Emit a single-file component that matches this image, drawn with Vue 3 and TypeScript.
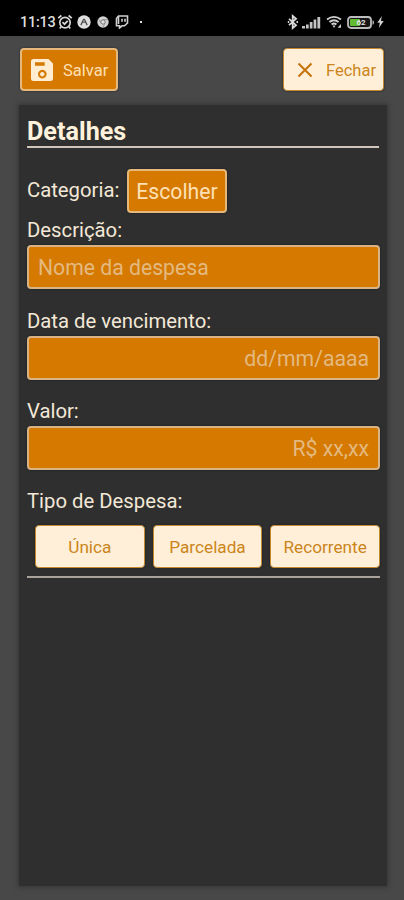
<script setup lang="ts">
import { ref } from 'vue'

interface Field {
  id: string
  label: string
  placeholder: string
  alignEnd: boolean
}

const fields: Field[] = [
  { id: 'descricao', label: 'Descrição:', placeholder: 'Nome da despesa', alignEnd: false },
  { id: 'vencimento', label: 'Data de vencimento:', placeholder: 'dd/mm/aaaa', alignEnd: true },
  { id: 'valor', label: 'Valor:', placeholder: 'R$ xx,xx', alignEnd: true },
]

const values = ref<Record<string, string>>({ descricao: '', vencimento: '', valor: '' })
const types: string[] = ['Única', 'Parcelada', 'Recorrente']
</script>

<template>
  <div class="screen">
    <header class="status">
      <div class="status-left">
        <span class="clock">11:13</span>
        <svg class="alarm" width="16" height="16" viewBox="0 0 16 16" fill="none" stroke="#d6d6d6" stroke-width="1.7">
          <circle cx="8" cy="8.6" r="5.2" />
          <path d="M1.2 4.2 4.4 1.5M14.8 4.2 11.6 1.5M5.5 8.2l2 2 3.2-3.400M4.200 12.600 2.800 14.400M11.800 12.600l1.400 1.800" />
        </svg>
        <svg class="round" width="14" height="14" viewBox="0 0 14 14">
          <circle cx="7" cy="7" r="6.7" fill="#dedede" />
          <path d="M3.800 10C5.300 8 6 4.200 7 4.200S8.700 8 10.200 10M7 6.500v1.500" fill="none" stroke="#444" stroke-width="1.300" />
        </svg>
        <svg class="chrome" width="12" height="12" viewBox="0 0 12 12">
          <circle cx="6" cy="6" r="5.700" fill="#d4d4d4" />
          <circle cx="6" cy="6" r="2.200" fill="#e2e2e2" stroke="#777" />
          <path d="M6 3.600h5M4 7.200 1.500 3M8 7.200 5.800 11.300" stroke="#888" stroke-width=".8" />
        </svg>
        <svg class="twitch" width="14" height="14" viewBox="0 0 14 14" fill="none" stroke="#d0d0d0" stroke-width="1.600">
          <path d="M3.500 1h9v7L9.500 10.800H7L4.500 13v-2.200H1.500V3.500z" />
          <path d="M3.500 1v8M7 3.700v3M10 3.700v3" />
        </svg>
        <span class="dot"></span>
      </div>
      <div class="status-right">
        <svg width="12" height="16" viewBox="0 0 12 16" fill="none" stroke="#d9d9d9" stroke-width="1.800">
          <path d="M2 4.800 9 11.200 5.700 14V2L9 4.800 2 11.200M.8 8h1.400M9.500 8H11" />
        </svg>
        <svg class="signal" width="19" height="13" viewBox="0 0 19 13" fill="#c4c4c4">
          <path d="M0 10h3v2.500H0zM4 8.500h2.700v4H4zM7.800 6h2.700v6.500H7.800zM11.600 3.500h2.700v9h-2.700zM15.400 1h2.800v11.500h-2.800z" />
        </svg>
        <svg class="wifi" width="16" height="14" viewBox="0 0 16 14" fill="none" stroke="#cfcfcf" stroke-width="1.900">
          <path d="M1 4.500Q8-.800 15 4.500M3.400 7Q8 3.400 12.600 7M5.600 9.500Q8 7.500 10.400 9.500" />
          <path d="M6.500 10.500h3L8 13zM11.500 12.800h3.500V9z" fill="#ccc" stroke="none" />
        </svg>
        <svg class="battery" width="28" height="13" viewBox="0 0 28 13">
          <rect x="1" y="1" width="23" height="11" rx="3" fill="#161616" stroke="#bcbcbc" stroke-width="1.800" />
          <rect x="3" y="3" width="10" height="7" rx="1" fill="#62bd32" />
          <path d="M25.500 4.200c2 .5 2 4.100 0 4.600z" fill="#bbb" />
          <text x="14" y="9.300" class="level">62</text>
        </svg>
        <svg class="bolt" width="7" height="12" viewBox="0 0 7 12">
          <path d="M4.800 0 .3 6.700h2.500L1.900 12l4.800-7H4z" fill="#d0d0d0" />
        </svg>
      </div>
    </header>

    <nav class="actions">
      <button class="btn save" type="button">
        <svg width="24" height="24" viewBox="0 0 24 24">
          <path fill-rule="evenodd" d="M3.500 1h15L23 5.500v15q0 2.500-2.500 2.500h-17Q1 23 1 20.500v-17Q1 1 3.500 1zM5 4.200v3.600h9.700V4.200zM12.300 11.800a4.300 4.300 0 1 0 .01 0zM12.300 14a2.200 2.200 0 1 1-.01 0z" fill="#ffecd1" />
        </svg>
        <span>Salvar</span>
      </button>
      <button class="btn light close" type="button">
        <svg width="16" height="16" viewBox="0 0 16 16" fill="none" stroke="#c67209" stroke-width="2">
          <path d="m1.500 1.500 13 13M14.500 1.500l-13 13" />
        </svg>
        <span>Fechar</span>
      </button>
    </nav>

    <main class="panel">
      <h1>Detalhes</h1>
      <div class="category">
        <span>Categoria:</span>
        <button class="btn choose" type="button">Escolher</button>
      </div>
      <div v-for="field in fields" :key="field.id" class="field">
        <label :for="field.id">{{ field.label }}</label>
        <input :id="field.id" v-model="values[field.id]" type="text" :placeholder="field.placeholder" :class="{ end: field.alignEnd }" />
      </div>
      <p class="type-label">Tipo de Despesa:</p>
      <div class="types">
        <button v-for="name in types" :key="name" class="btn light" type="button">{{ name }}</button>
      </div>
    </main>
  </div>
</template>

<style>
body {
  background: #484848;
}
</style>

<style scoped>
* {
  box-sizing: border-box;
}
.screen {
  display: flex;
  flex-direction: column;
  height: 900px;
  background: #484848;
  color: #f3e8d7;
  font-family: Roboto, "Liberation Sans", sans-serif;
}
.status {
  display: flex;
  justify-content: space-between;
  height: 36px;
  padding: 8px 20px 0 20px;
  background: #000;
}
.status-left,
.status-right {
  display: flex;
  align-items: center;
  height: 28px;
}
.clock {
  width: 36px;
  padding-top: 1px;
  color: #dedede;
  font-size: 14.5px;
  font-weight: 500;
  letter-spacing: -0.25px;
}
.alarm {
  margin-left: 1px;
}
.round {
  margin-left: 4px;
}
.chrome {
  margin-left: 6px;
}
.twitch {
  margin-left: 6px;
}
.dot {
  width: 2px;
  height: 2px;
  margin-left: 11px;
  background: #ddd;
}
.signal {
  margin-left: 3px;
}
.wifi {
  margin-left: 5px;
}
.battery {
  margin-left: 5px;
}
.level {
  fill: #e4e4e4;
  font-size: 8px;
  font-weight: 700;
  text-anchor: middle;
}
.bolt {
  margin-left: 2px;
}
.actions {
  display: flex;
  justify-content: space-between;
  padding: 12px 20px 14px;
}
.btn {
  display: flex;
  align-items: center;
  justify-content: center;
  height: 43px;
  padding: 0;
  border: 2px solid #e6b87a;
  border-radius: 4px;
  background: #d57900;
  color: #ffe0b4;
  font-family: inherit;
  font-size: 17.2px;
  box-shadow: 0 0 2px #17202a;
}
.btn.light {
  border: 1px solid #c4892f;
  background: #ffefd9;
  color: #cb851b;
}
.btn.save {
  width: 98px;
  justify-content: flex-start;
  padding-left: 8px;
  gap: 9px;
  font-size: 16.500px;
}
.btn.close {
  width: 101px;
  justify-content: flex-start;
  padding-left: 13px;
  gap: 13px;
  font-size: 16.500px;
}
.btn.save span,
.btn.close span {
  padding-top: 1px;
}
.panel {
  width: 368px;
  height: 781px;
  margin-left: 19px;
  padding: 0 8px;
  background: #2f2f2f;
  box-shadow: 0 0 5px 1px #353535;
}
h1 {
  height: 43px;
  margin: 0 0 21px;
  padding-top: 6px;
  border-bottom: 2px solid #cfc6b9;
  color: #fff2dd;
  font-size: 25.200px;
  line-height: 41px;
  font-weight: 700;
}
.category {
  display: flex;
  align-items: center;
  height: 44px;
  font-size: 20.300px;
}
.category > span {
  width: 100px;
  line-height: 40px;
  padding-bottom: 3px;
}
.btn.choose {
  width: 100px;
  height: 44px;
  font-size: 21.200px;
}
.field {
  margin-bottom: 14px;
}
.category + .field {
  margin-bottom: 15px;
}
label,
.type-label {
  display: block;
  height: 32px;
  margin: 0;
  font-size: 20.300px;
  line-height: 34px;
}
input {
  display: block;
  width: 353px;
  height: 44px;
  padding: 1px 9px 0;
  border: 2px solid #d9b384;
  border-radius: 4px;
  outline: 0;
  background: #d57900;
  color: #ffe0b4;
  font-family: inherit;
  font-size: 21.200px;
  box-shadow: 0 0 2px #111b26;
}
input::placeholder {
  color: #e4b980;
  opacity: 1;
}
.end {
  text-align: right;
}
.types {
  display: grid;
  grid-template-columns: repeat(3, 1fr);
  column-gap: 8px;
  width: 353px;
  height: 62px;
  padding: 9px 0 0 8px;
  border-bottom: 2px solid #aaa39b;
}
</style>
